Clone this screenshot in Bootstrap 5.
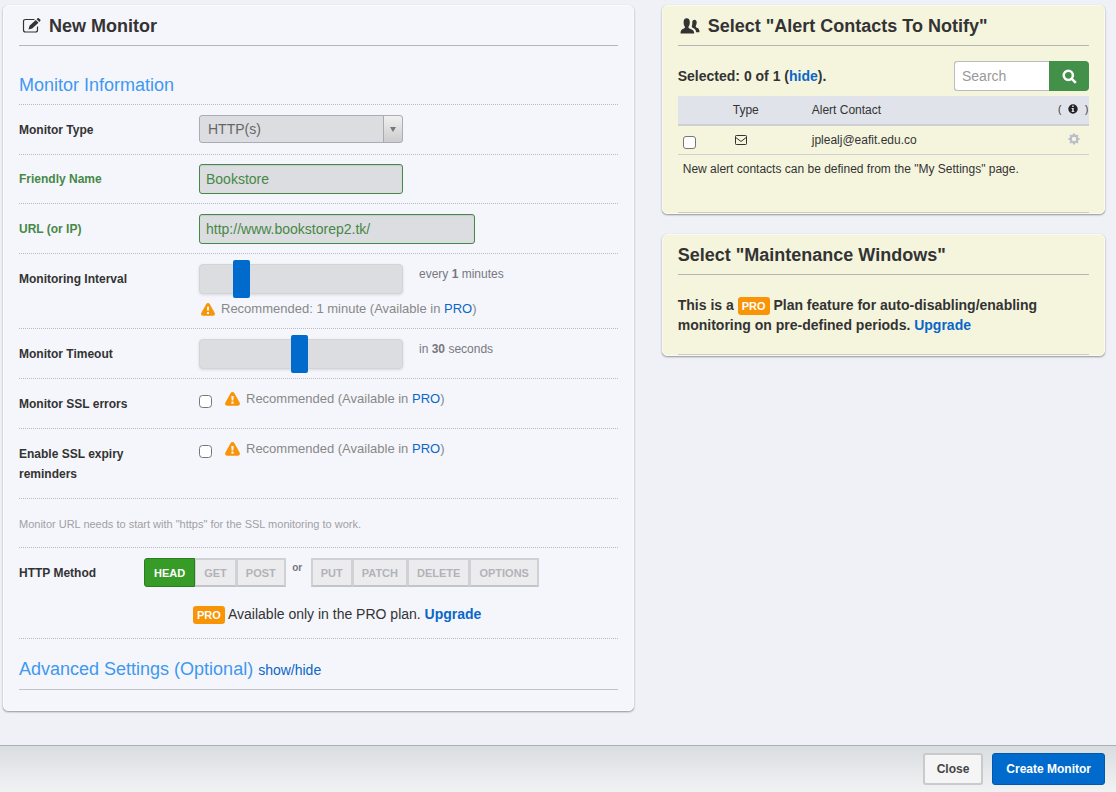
<!DOCTYPE html>
<html lang="en">
<head>
<meta charset="utf-8">
<meta name="viewport" content="width=device-width, initial-scale=1">
<title>New Monitor</title>
<link href="https://cdn.jsdelivr.net/npm/bootstrap@5.3.0/dist/css/bootstrap.min.css" rel="stylesheet">
<style>
  :root { --ink:#333; --link:#0a66c8; --ok:#468847; --orange:#f89406; }
  body { font-family:"Liberation Sans",Arial,sans-serif; font-size:14px; line-height:20px; color:var(--ink); background:#f0f1f7; padding-bottom:60px; }
  a { color:var(--link); text-decoration:none; }
  a:hover { text-decoration:underline; }
  .page-grid { display:grid; grid-template-columns:37fr 26fr; gap:28px; padding:5px 11px 0 3px; align-items:start; }
  .side-stack { gap:20px; }
  .panel { background:#f5f6fb; border:1px solid #fbfbfd; border-radius:5px; box-shadow:0 1px 2px rgba(0,0,0,.4); padding:0 15px; }
  .panel-note { background:#f5f5de; border-color:#fafaee; }
  .panel-title { font-size:18px; line-height:20px; font-weight:700; margin:0; padding:10px 0 9px; border-bottom:1px solid #b5b5ba; gap:8px; }
  .section-title { font-size:18px; line-height:20px; font-weight:400; color:#3f98f0; margin:0; }
  .first-section { padding:29px 0 9px; border-bottom:1px dotted #b9bac0; }
  .f-row { border-bottom:1px dotted #b9bac0; min-height:50px; padding:10px 0 9px; }
  .f-short { min-height:49px; padding-top:9px; }
  .f-tall { padding-bottom:14px; }
  .f-label { flex:0 0 180px; font-size:12px; font-weight:700; padding:5px 40px 0 0; }
  .f-label.narrow { flex-basis:125px; padding-right:0; }
  .is-ok label { color:var(--ok); }
  .f-ctl { width:204px; height:30px; font-size:14px; line-height:20px; padding:4px 6px; border-radius:3px; background:#dcdde0; }
  .f-ctl.f-ok { color:var(--ok); border-color:var(--ok); box-shadow:inset 0 1px 1px rgba(0,0,0,.08); }
  .f-ctl.wide { width:276px; }
  select.f-ctl { height:28px; padding:3px 24px 3px 8px; color:#666; border-color:#aaabb5;
    background-color:#dcdde0; background-repeat:no-repeat; background-size:8px 7px,1px 26px,18px 26px; background-position:right 5px center,right 18px top,right top;
    background-image:url("data:image/svg+xml,%3Csvg xmlns='http://www.w3.org/2000/svg' viewBox='0 0 8 7'%3E%3Cpath d='M1 1h6L4 6z' fill='%23777'/%3E%3C/svg%3E"),linear-gradient(#aaa,#aaa),linear-gradient(#f0f0f0,#ccc); }
  .slide { width:204px; height:38px; margin:-4px 0; }
  .slide::-webkit-slider-runnable-track { height:30px; background:#dcdde0; border:1px solid #d3d4d8; border-radius:4px; box-shadow:0 1px 3px rgba(0,0,0,.12); }
  .slide::-webkit-slider-thumb { width:17px; height:38px; margin-top:-5px; background:#006bcd; border-radius:2px; box-shadow:none; }
  .slide-val { font-size:12px; color:#77787f; margin-left:16px; }
  .hint { color:#888; font-size:13px; gap:6px; }
  .hint-under { margin:5px 0 0 2px; }
  .box { width:13px; height:13px; margin:0; flex:none; border:1px solid #767676; border-radius:3px; background-color:#fff; }
  .f-check .box { margin:6px 13px 0 0; }
  .warn { fill:var(--orange); flex:none; }
  .fine { font-size:11px; color:#a0a0a5; padding-top:6px; }
  .m-btn { font-size:11px; line-height:16px; font-weight:700; height:29px; padding:4px 8px; border:2px solid #d0d1d5; border-bottom-color:#c3c4c8; background:#ececef; color:#b3b3b7; border-radius:0; margin-left:-2px; }
  .m-btn:hover { background:#e4e4e8; color:#999; }
  .m-btn.on { background:#369c27; border:1px solid #2a7d1e; color:#fff; padding:5px 9px; border-radius:3px 0 0 3px; margin-left:0; z-index:2; }
  .m-first { margin-left:0; }
  .m-or { font-size:10px; font-weight:700; color:#77787f; width:25px; padding-right:2px; }
  .tag-pro { font-size:11px; line-height:18px; font-weight:700; color:#fff; background:var(--orange); border-radius:3px; padding:0 4px; display:inline-block; }
  .upgrade-line { margin:17px 0 5px 174px; }
  .adv { padding:20px 0 9px; border-bottom:1px solid #c2c3c8; margin-bottom:20px; gap:5px; }
  .pick-bar { padding-top:15px; margin-bottom:5px; }
  .find { width:135px; }
  .find .form-control { height:30px; font-size:14px; padding:4px 7px; border-color:#bbbbc2; border-right:0; border-radius:3px 0 0 3px; }
  .find .form-control::placeholder { color:#999; }
  .find .btn { flex:0 0 40px; height:30px; padding:0; background:#43904a; border-radius:0 4px 4px 0; }
  .contacts { font-size:12px; line-height:20px; margin:0; --bs-table-bg:transparent; border-color:#cfd0d0; table-layout:fixed; }
  .contacts th { background:#e0e3ea; font-weight:400; color:#333; padding:4px 0; border-bottom:2px solid #cfd0d4; }
  .contacts td { padding:4px 0; color:var(--ink); }
  .contacts .box { display:block; margin:6px 0 0 5px; }
  .contacts svg { vertical-align:-1px; }
  .contacts .i-mail { margin-left:2px; }
  .c-pick { width:55px; } .c-type { width:79px; } .contacts .c-act { width:31px; font-size:10px; }
  .contacts-note { font-size:12px; padding:4px 5px 33px; border-bottom:1px solid #cbcbc2; }
  .plan-note { font-weight:700; padding:20px 0 19px; border-bottom:1px solid #cbcbc2; }
  .foot { border-top:1px solid #abb0b4; background:linear-gradient(#d9dde0,#f1f2f4); padding:7px 11px; gap:9px; }
  .foot .btn { font-size:12px; line-height:20px; font-weight:700; height:32px; padding:4px 12px; border-radius:3px; }
  .foot .b-close { background:#f5f5f5; border:2px solid #c9cacc; color:#444; }
  .foot .b-create { background:#006bcd; border:1px solid #0059ac; color:#fff; padding:5px 13px; }
</style>
</head>
<body>
<svg class="d-none" aria-hidden="true">
  <symbol id="i-warn" viewBox="0 0 14 13"><path fill-rule="evenodd" d="M7 0c.8 0 1.300.4 1.700 1l4.900 8.800c.8 1.500 0 2.900-1.500 2.900H1.900C.4 12.700-.4 11.300.4 9.800L5.300 1C5.700.4 6.200 0 7 0zM5.900 3.700l.3 4.100h1.600l.3-4.100zM6 8.900v2h2v-2z"/></symbol>
</svg>
<main class="page-grid">
  <form class="panel" id="monitor">
    <h1 class="panel-title d-flex align-items-center">
      <svg width="22" height="18" viewBox="0 0 22 18" fill="none" stroke="#333" aria-hidden="true"><path d="M15.500 2.500H6.500Q4.500 2.500 4.500 4.500v8.500Q4.500 15 6.500 15h10Q18.500 15 18.500 13V9.500" stroke-width="1.200"/><path d="M9.500 12.500l1-3.800L16.800 3l2.700 2.700-6.300 5.800zM17.600 2.200l1.200-1.100q.5-.4 1 .1l1.600 1.600q.5.5 0 1l-1.100 1.100z" fill="#333" stroke="none"/></svg>
      New Monitor</h1>
    <h2 class="section-title first-section">Monitor Information</h2>
    <div class="f-row d-flex"><label class="f-label" for="type">Monitor Type</label>
      <select class="form-select f-ctl" id="type"><option>HTTP(s)</option></select></div>
    <div class="f-row f-short d-flex is-ok"><label class="f-label" for="name">Friendly Name</label>
      <input class="form-control f-ctl f-ok" id="name" type="text" value="Bookstore"></div>
    <div class="f-row d-flex is-ok"><label class="f-label" for="url">URL (or IP)</label>
      <input class="form-control f-ctl f-ok wide" id="url" type="text" value="http://www.bookstorep2.tk/"></div>
    <div class="f-row d-flex"><label class="f-label" for="interval">Monitoring Interval</label>
      <div>
        <div class="d-flex"><input class="form-range slide" id="interval" type="range" min="0" max="100" value="18"><span class="slide-val">every <b>1</b> minutes</span></div>
        <div class="hint hint-under d-flex align-items-center"><svg class="warn" width="14" height="13"><use href="#i-warn"/></svg><span>Recommended: 1 minute (Available in <a href="#pro">PRO</a>)</span></div>
      </div></div>
    <div class="f-row d-flex"><label class="f-label" for="timeout">Monitor Timeout</label>
      <input class="form-range slide" id="timeout" type="range" min="0" max="100" value="49"><span class="slide-val">in <b>30</b> seconds</span></div>
    <div class="f-row f-check d-flex"><label class="f-label" for="ssl">Monitor SSL errors</label>
      <input class="form-check-input box" id="ssl" type="checkbox">
      <div class="hint d-flex align-items-center align-self-start"><svg class="warn" width="15" height="14"><use href="#i-warn"/></svg><span>Recommended (Available in <a href="#pro">PRO</a>)</span></div></div>
    <div class="f-row f-tall f-check d-flex"><label class="f-label" for="expiry">Enable SSL expiry reminders</label>
      <input class="form-check-input box" id="expiry" type="checkbox">
      <div class="hint d-flex align-items-center align-self-start"><svg class="warn" width="15" height="14"><use href="#i-warn"/></svg><span>Recommended (Available in <a href="#pro">PRO</a>)</span></div></div>
    <div class="f-row f-short"><div class="fine">Monitor URL needs to start with "https" for the SSL monitoring to work.</div></div>
    <div class="f-row">
      <div class="d-flex" role="group" aria-label="HTTP Method"><span class="f-label narrow">HTTP Method</span>
        <div class="btn-group"><button type="button" class="btn m-btn on">HEAD</button><button type="button" class="btn m-btn">GET</button><button type="button" class="btn m-btn">POST</button></div>
        <span class="m-or text-center">or</span>
        <div class="btn-group"><button type="button" class="btn m-btn m-first">PUT</button><button type="button" class="btn m-btn">PATCH</button><button type="button" class="btn m-btn">DELETE</button><button type="button" class="btn m-btn">OPTIONS</button></div>
      </div>
      <div class="upgrade-line"><span class="tag-pro">PRO</span> Available only in the PRO plan. <a class="fw-bold" href="#upgrade">Upgrade</a></div>
    </div>
    <div class="adv d-flex align-items-baseline"><h2 class="section-title">Advanced Settings (Optional)</h2><a href="#advanced">show/hide</a></div>
  </form>

  <div class="side-stack d-flex flex-column">
    <section class="panel panel-note">
      <h2 class="panel-title d-flex align-items-center">
        <svg width="22" height="18" viewBox="0 0 22 18" fill="#333" aria-hidden="true"><path d="M14.500 10.800c-.7-.6-.9-1.400-.5-2.200.3-.8.3-1.800.3-3C14.300 3.800 15 2.800 16.400 2.800s2.300 1 2.300 2.700c0 1.300-.3 2.300-.9 3.200-.3 1 .2 1.700 1.200 2.100 1.600.7 2.500 1.600 2.500 4.500h-3.300c-.3-2.300-1.200-3.600-3.700-4.500z"/><path d="M2.500 16.500c0-3.300 1-4 3-4.800 1.300-.5 1.700-1.200 1.300-2.200C6 8.400 5.600 7.200 5.600 5c0-2.400 1.100-3.800 3.100-3.800s3.100 1.400 3.100 3.800c0 2.200-.4 3.400-1.200 4.500-.4 1 0 1.700 1.300 2.200 2.400.9 4.300 1.500 4.300 4.800z"/></svg>
        Select "Alert Contacts To Notify"</h2>
      <div class="pick-bar d-flex justify-content-between align-items-center">
        <b>Selected: 0 of 1 (<a href="#hide">hide</a>).</b>
        <form class="find d-flex" role="search"><input class="form-control" type="text" placeholder="Search" aria-label="Search">
          <button class="btn d-flex align-items-center justify-content-center" type="submit" aria-label="Search contacts"><svg width="15" height="15" viewBox="0 0 15 15" fill="none" stroke="#fff" stroke-width="2.500"><circle cx="6.300" cy="6.300" r="4.600"/><path d="M9.800 9.800l4 4"/></svg></button></form>
      </div>
      <table class="table contacts">
        <thead><tr><th class="c-pick"></th><th class="c-type">Type</th><th>Alert Contact</th><th class="c-act">( <svg class="mx-1" width="10" height="10" viewBox="0 0 10 10"><path fill="#222" fill-rule="evenodd" d="M5 .3a4.700 4.700 0 1 1 0 9.400A4.700 4.700 0 0 1 5 .3zM4.200 1.600v1.400h1.500V1.600zM3.600 4v.9h.6v2.300h-.6v.9h2.800v-.9h-.7V4z"/></svg> )</th></tr></thead>
        <tbody><tr><td><input class="form-check-input box" type="checkbox" aria-label="Select jplealj@eafit.edu.co"></td>
          <td><svg class="i-mail" width="12" height="10" viewBox="0 0 12 10" fill="none" stroke="#333" aria-label="E-mail"><rect x=".5" y=".5" width="11" height="9" rx=".8"/><path d="M.8 2.500L6 6.500l5.200-4"/></svg></td>
          <td>jplealj@eafit.edu.co</td>
          <td class="text-center"><svg width="12" height="12" viewBox="-6 -6 12 12" fill="none" stroke="#b9bdca" aria-label="Settings"><circle r="3.300" stroke-width="2.200"/><path d="M0-5.500V-4M0 5.500V4M-5.500 0H-4M5.500 0H4M-3.900-3.900l1 1M3.900 3.900l-1-1M-3.900 3.900l1-1M3.900-3.900l-1 1" stroke-width="2.200"/></svg></td></tr></tbody>
      </table>
      <div class="contacts-note">New alert contacts can be defined from the "My Settings" page.</div>
    </section>
    <section class="panel panel-note">
      <h2 class="panel-title">Select "Maintenance Windows"</h2>
      <div class="plan-note">This is a <span class="tag-pro">PRO</span> Plan feature for auto-disabling/enabling monitoring on pre-defined periods. <a href="#upgrade">Upgrade</a></div>
    </section>
  </div>
</main>
<footer class="foot fixed-bottom d-flex justify-content-end">
  <button type="button" class="btn b-close">Close</button>
  <button type="submit" form="monitor" class="btn b-create">Create Monitor</button>
</footer>
<script src="https://cdn.jsdelivr.net/npm/bootstrap@5.3.0/dist/js/bootstrap.bundle.min.js"></script>
</body>
</html>
